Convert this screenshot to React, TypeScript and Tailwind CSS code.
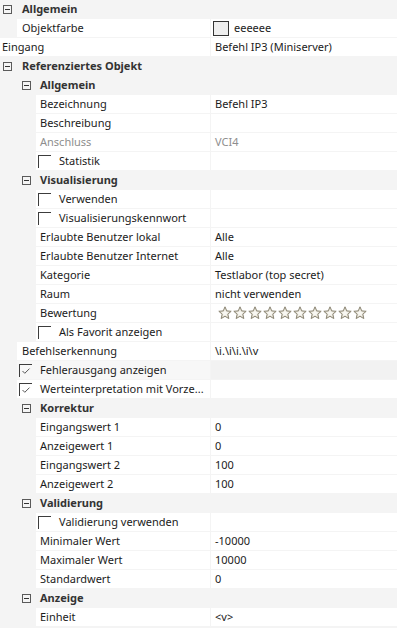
import React from 'react';

type Level = 0 | 1 | 2;

type Item =
    | { kind: 'header'; level: Level; label: string }
    | { kind: 'prop'; level: Level; label: string; value?: string; disabled?: boolean; swatch?: boolean; stars?: boolean }
    | { kind: 'check'; level: Level; label: string; checked?: boolean; hover?: boolean };

const items: Item[] = [
    { kind: 'header', level: 0, label: 'Allgemein' },
    { kind: 'prop', level: 1, label: 'Objektfarbe', value: 'eeeeee', swatch: true },
    { kind: 'prop', level: 0, label: 'Eingang', value: 'Befehl IP3 (Miniserver)' },
    { kind: 'header', level: 0, label: 'Referenziertes Objekt' },
    { kind: 'header', level: 1, label: 'Allgemein' },
    { kind: 'prop', level: 2, label: 'Bezeichnung', value: 'Befehl IP3' },
    { kind: 'prop', level: 2, label: 'Beschreibung', value: '' },
    { kind: 'prop', level: 2, label: 'Anschluss', value: 'VCI4', disabled: true },
    { kind: 'check', level: 2, label: 'Statistik' },
    { kind: 'header', level: 1, label: 'Visualisierung' },
    { kind: 'check', level: 2, label: 'Verwenden' },
    { kind: 'check', level: 2, label: 'Visualisierungskennwort' },
    { kind: 'prop', level: 2, label: 'Erlaubte Benutzer lokal', value: 'Alle' },
    { kind: 'prop', level: 2, label: 'Erlaubte Benutzer Internet', value: 'Alle' },
    { kind: 'prop', level: 2, label: 'Kategorie', value: 'Testlabor (top secret)' },
    { kind: 'prop', level: 2, label: 'Raum', value: 'nicht verwenden' },
    { kind: 'prop', level: 2, label: 'Bewertung', stars: true },
    { kind: 'check', level: 2, label: 'Als Favorit anzeigen' },
    { kind: 'prop', level: 1, label: 'Befehlserkennung', value: '\\i.\\i\\i.\\i\\v' },
    { kind: 'check', level: 1, label: 'Fehlerausgang anzeigen', checked: true, hover: true },
    { kind: 'check', level: 1, label: 'Werteinterpretation mit Vorze...', checked: true },
    { kind: 'header', level: 1, label: 'Korrektur' },
    { kind: 'prop', level: 2, label: 'Eingangswert 1', value: '0' },
    { kind: 'prop', level: 2, label: 'Anzeigewert 1', value: '0' },
    { kind: 'prop', level: 2, label: 'Eingangswert 2', value: '100' },
    { kind: 'prop', level: 2, label: 'Anzeigewert 2', value: '100' },
    { kind: 'header', level: 1, label: 'Validierung' },
    { kind: 'check', level: 2, label: 'Validierung verwenden' },
    { kind: 'prop', level: 2, label: 'Minimaler Wert', value: '-10000' },
    { kind: 'prop', level: 2, label: 'Maximaler Wert', value: '10000' },
    { kind: 'prop', level: 2, label: 'Standardwert', value: '0' },
    { kind: 'header', level: 1, label: 'Anzeige' },
    { kind: 'prop', level: 2, label: 'Einheit', value: '<v>' },
];

// gutter left of the white label cell, and the label cell width (up to the column line at 210)
const gutter = ['w-0', 'w-[17px]', 'w-[36px]'];
const labelW = ['w-[210px]', 'w-[193px]', 'w-[174px]'];
const labelPad = ['pl-[2px]', 'pl-[5px]', 'pl-[4px]'];
const headPad = ['w-[22px] pl-[3px]', 'w-[40px] pl-[22px]'];

function Expander() {
    return (
        <svg width="9" height="9" viewBox="0 0 9 9" className="block">
            <rect x="0.5" y="0.5" width="8" height="8" fill="none" stroke="#5a5a5a" />
            <line x1="2" y1="4.5" x2="7" y2="4.5" stroke="#333" />
        </svg>
    );
}

function CheckBox({ checked }: { checked?: boolean }) {
    return (
        <div className="relative h-[13px] w-[13px] shrink-0 border-l border-t border-[#3c3c3c]">
            {checked && (
                <svg width="12" height="12" viewBox="0 0 12 12" className="absolute left-0 top-0">
                    <path d="M2.5 6 L4.8 8.3 L9.5 3.6" fill="none" stroke="#555" strokeWidth="1" />
                </svg>
            )}
        </div>
    );
}

function Star() {
    return (
        <svg width="14" height="14" viewBox="0 0 14 14" className="block">
            <path
                d="M7 0.8 L8.75 4.9 L13.18 5.29 L9.85 8.2 L10.82 12.56 L7 10.3 L3.18 12.56 L4.15 8.2 L0.82 5.29 L5.25 4.9 Z"
                fill="#e4e0d4"
                stroke="#8a8472"
                strokeWidth="1"
                strokeLinejoin="round"
            />
            <path d="M7 3.6 L8 6 L10.4 6.3 L8.6 7.9 L9.1 10.2 L7 9 L4.9 10.2 L5.4 7.9 L3.6 6.3 L6 6 Z" fill="#f8f7f2" />
        </svg>
    );
}

function Row({ it }: { it: Item }) {
    if (it.kind === 'header') {
        return (
            <div className="flex h-[19px] items-center pb-px">
                <div className={`flex shrink-0 items-center ${headPad[it.level]}`}>
                    <Expander />
                </div>
                <span className="font-bold text-[#333]">{it.label}</span>
            </div>
        );
    }

    const bg = it.kind === 'check' && it.hover ? 'bg-[#f7f7f7]' : 'bg-white';

    return (
        <div className="flex h-[19px] pb-px">
            <div className={`shrink-0 ${gutter[it.level]}`} />
            <div className={`flex shrink-0 items-center overflow-hidden whitespace-nowrap ${labelW[it.level]} ${bg} ${it.kind === 'check' ? 'pl-[2px]' : labelPad[it.level]}`}>
                {it.kind === 'check' ? (
                    <>
                        <CheckBox checked={it.checked} />
                        <span className="ml-[8px] text-[#1b1b1b]">{it.label}</span>
                    </>
                ) : (
                    <span className={it.disabled ? 'text-[#8e8e8e]' : 'text-[#1b1b1b]'}>{it.label}</span>
                )}
            </div>
            <div className="w-px shrink-0" />
            <div className={`flex flex-1 items-center whitespace-nowrap pl-[4px] ${it.kind === 'check' && it.hover ? 'bg-[#f2f2f2]' : 'bg-white'}`}>
                {it.kind === 'prop' && it.swatch && (
                    <>
                        <div className="ml-[-2px] h-[15px] w-[16px] border border-[#333] bg-[#eeeeee]" />
                        <span className="ml-[5px] text-[#1b1b1b]">{it.value}</span>
                    </>
                )}
                {it.kind === 'prop' && it.stars && (
                    <div className="ml-[3px] flex gap-px">
                        {Array.from({ length: 10 }).map((_, i) => (
                            <Star key={i} />
                        ))}
                    </div>
                )}
                {it.kind === 'prop' && !it.swatch && !it.stars && (
                    <span className={it.disabled ? 'text-[#8e8e8e]' : 'text-[#1b1b1b]'}>{it.value}</span>
                )}
            </div>
        </div>
    );
}

export default function App() {
    return (
        <div className="h-[628px] w-[397px] overflow-hidden bg-[#f4f4f4] text-[11px] leading-[18px]" style={{ fontFamily: '"Noto Sans", "Liberation Sans", sans-serif' }}>
            {items.map((it, i) => (
                <Row key={i} it={it} />
            ))}
        </div>
    );
}
